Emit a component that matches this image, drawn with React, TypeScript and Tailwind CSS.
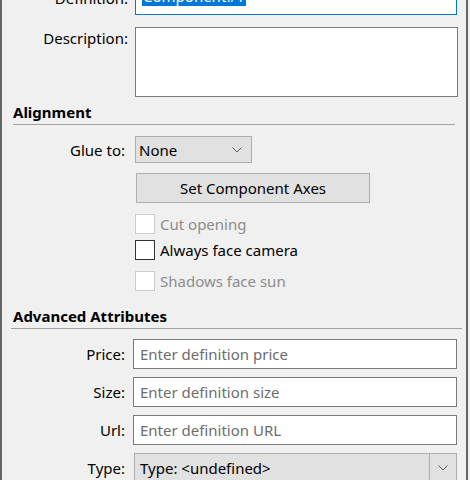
import React from "react";

function Chevron({ className = "" }: { className?: string }) {
  return (
    <svg width="10" height="6" viewBox="0 0 10 6" className={className}>
      <path d="M0.5 0.5 L5 5 L9.5 0.5" fill="none" stroke="#5a5a5a" strokeWidth="1" />
    </svg>
  );
}

function Check({ label, disabled }: { label: string; disabled?: boolean }) {
  return (
    <div className="flex items-center h-[20px]">
      <div
        className={
          "w-[20px] h-[20px] bg-white border " +
          (disabled ? "border-[#cccccc]" : "border-[#333333]")
        }
      />
      <span className={"ml-[5px] " + (disabled ? "text-[#8c8c8c]" : "text-black")}>{label}</span>
    </div>
  );
}

function TextRow({ label, placeholder, mt }: { label: string; placeholder: string; mt: string }) {
  return (
    <div className={"flex items-center " + mt}>
      <div className="w-[123px] text-right">{label}</div>
      <div className="ml-[8px] w-[324px] h-[30px] bg-white border border-[#7a7a7a] flex items-center pl-[6px] text-[#6d6d6d]">
        {placeholder}
      </div>
    </div>
  );
}

export default function App() {
  return (
    <div className="w-[470px] h-[480px] overflow-hidden bg-[#f0f0f0] font-['Noto_Sans',sans-serif] text-[15px] text-black leading-[20px]">
      <div className="w-[468px] h-[480px] border-l-2 border-r-2 border-[#646464] overflow-hidden">
        {/* Definition */}
        <div className="flex items-start -mt-[15px]">
          <div className="w-[126px] text-right mt-[3px]">Definition:</div>
          <div className="ml-[7px] w-[322px] h-[30px] bg-white border border-[#0078d7] flex items-start pl-[6px]">
            <span className="bg-[#0078d7] text-white px-[1px] mt-[0px]">Component#1</span>
          </div>
        </div>
        {/* Description */}
        <div className="flex items-start mt-[12px]">
          <div className="w-[126px] text-right mt-[1px]">Description:</div>
          <div className="ml-[7px] w-[323px] h-[70px] bg-white border border-[#7a7a7a]" />
        </div>
        {/* Alignment */}
        <div className="ml-[11px] mr-[11px] mt-[5px] border-b border-[#a0a0a0] pb-[2px]">
          <div className="font-bold leading-[20px]">Alignment</div>
        </div>
        <div className="flex items-center mt-[11px]">
          <div className="w-[123px] text-right">Glue to:</div>
          <div className="ml-[10px] w-[117px] h-[27px] bg-[#e1e1e1] border border-[#adadad] flex items-center justify-between pl-[3px] pr-[9px]">
            <span>None</span>
            <Chevron />
          </div>
        </div>
        <div className="ml-[134px] mt-[10px] w-[234px] h-[30px] bg-[#e1e1e1] border border-[#adadad] flex items-center justify-center">
          Set Component Axes
        </div>
        <div className="ml-[133px] mt-[11px]">
          <Check label="Cut opening" disabled />
        </div>
        <div className="ml-[133px] mt-[6px]">
          <Check label="Always face camera" />
        </div>
        <div className="ml-[133px] mt-[11px]">
          <Check label="Shadows face sun" disabled />
        </div>
        {/* Advanced */}
        <div className="ml-[9px] mr-[4px] mt-[15px] border-b border-[#a0a0a0] pb-[2px]">
          <div className="font-bold ml-[2px] leading-[20px]">Advanced Attributes</div>
        </div>
        <TextRow label="Price:" placeholder="Enter definition price" mt="mt-[10px]" />
        <TextRow label="Size:" placeholder="Enter definition size" mt="mt-[8px]" />
        <TextRow label="Url:" placeholder="Enter definition URL" mt="mt-[8px]" />
        <div className="flex items-center mt-[8px]">
          <div className="w-[123px] text-right">Type:</div>
          <div className="ml-[9px] w-[323px] h-[30px] bg-[#e1e1e1] border border-[#adadad] flex items-stretch">
            <div className="flex-1 flex items-center pl-[5px]">Type: &lt;undefined&gt;</div>
            <div className="w-[27px] border-l border-[#adadad] flex items-center justify-center">
              <Chevron />
            </div>
          </div>
        </div>
      </div>
    </div>
  );
}
